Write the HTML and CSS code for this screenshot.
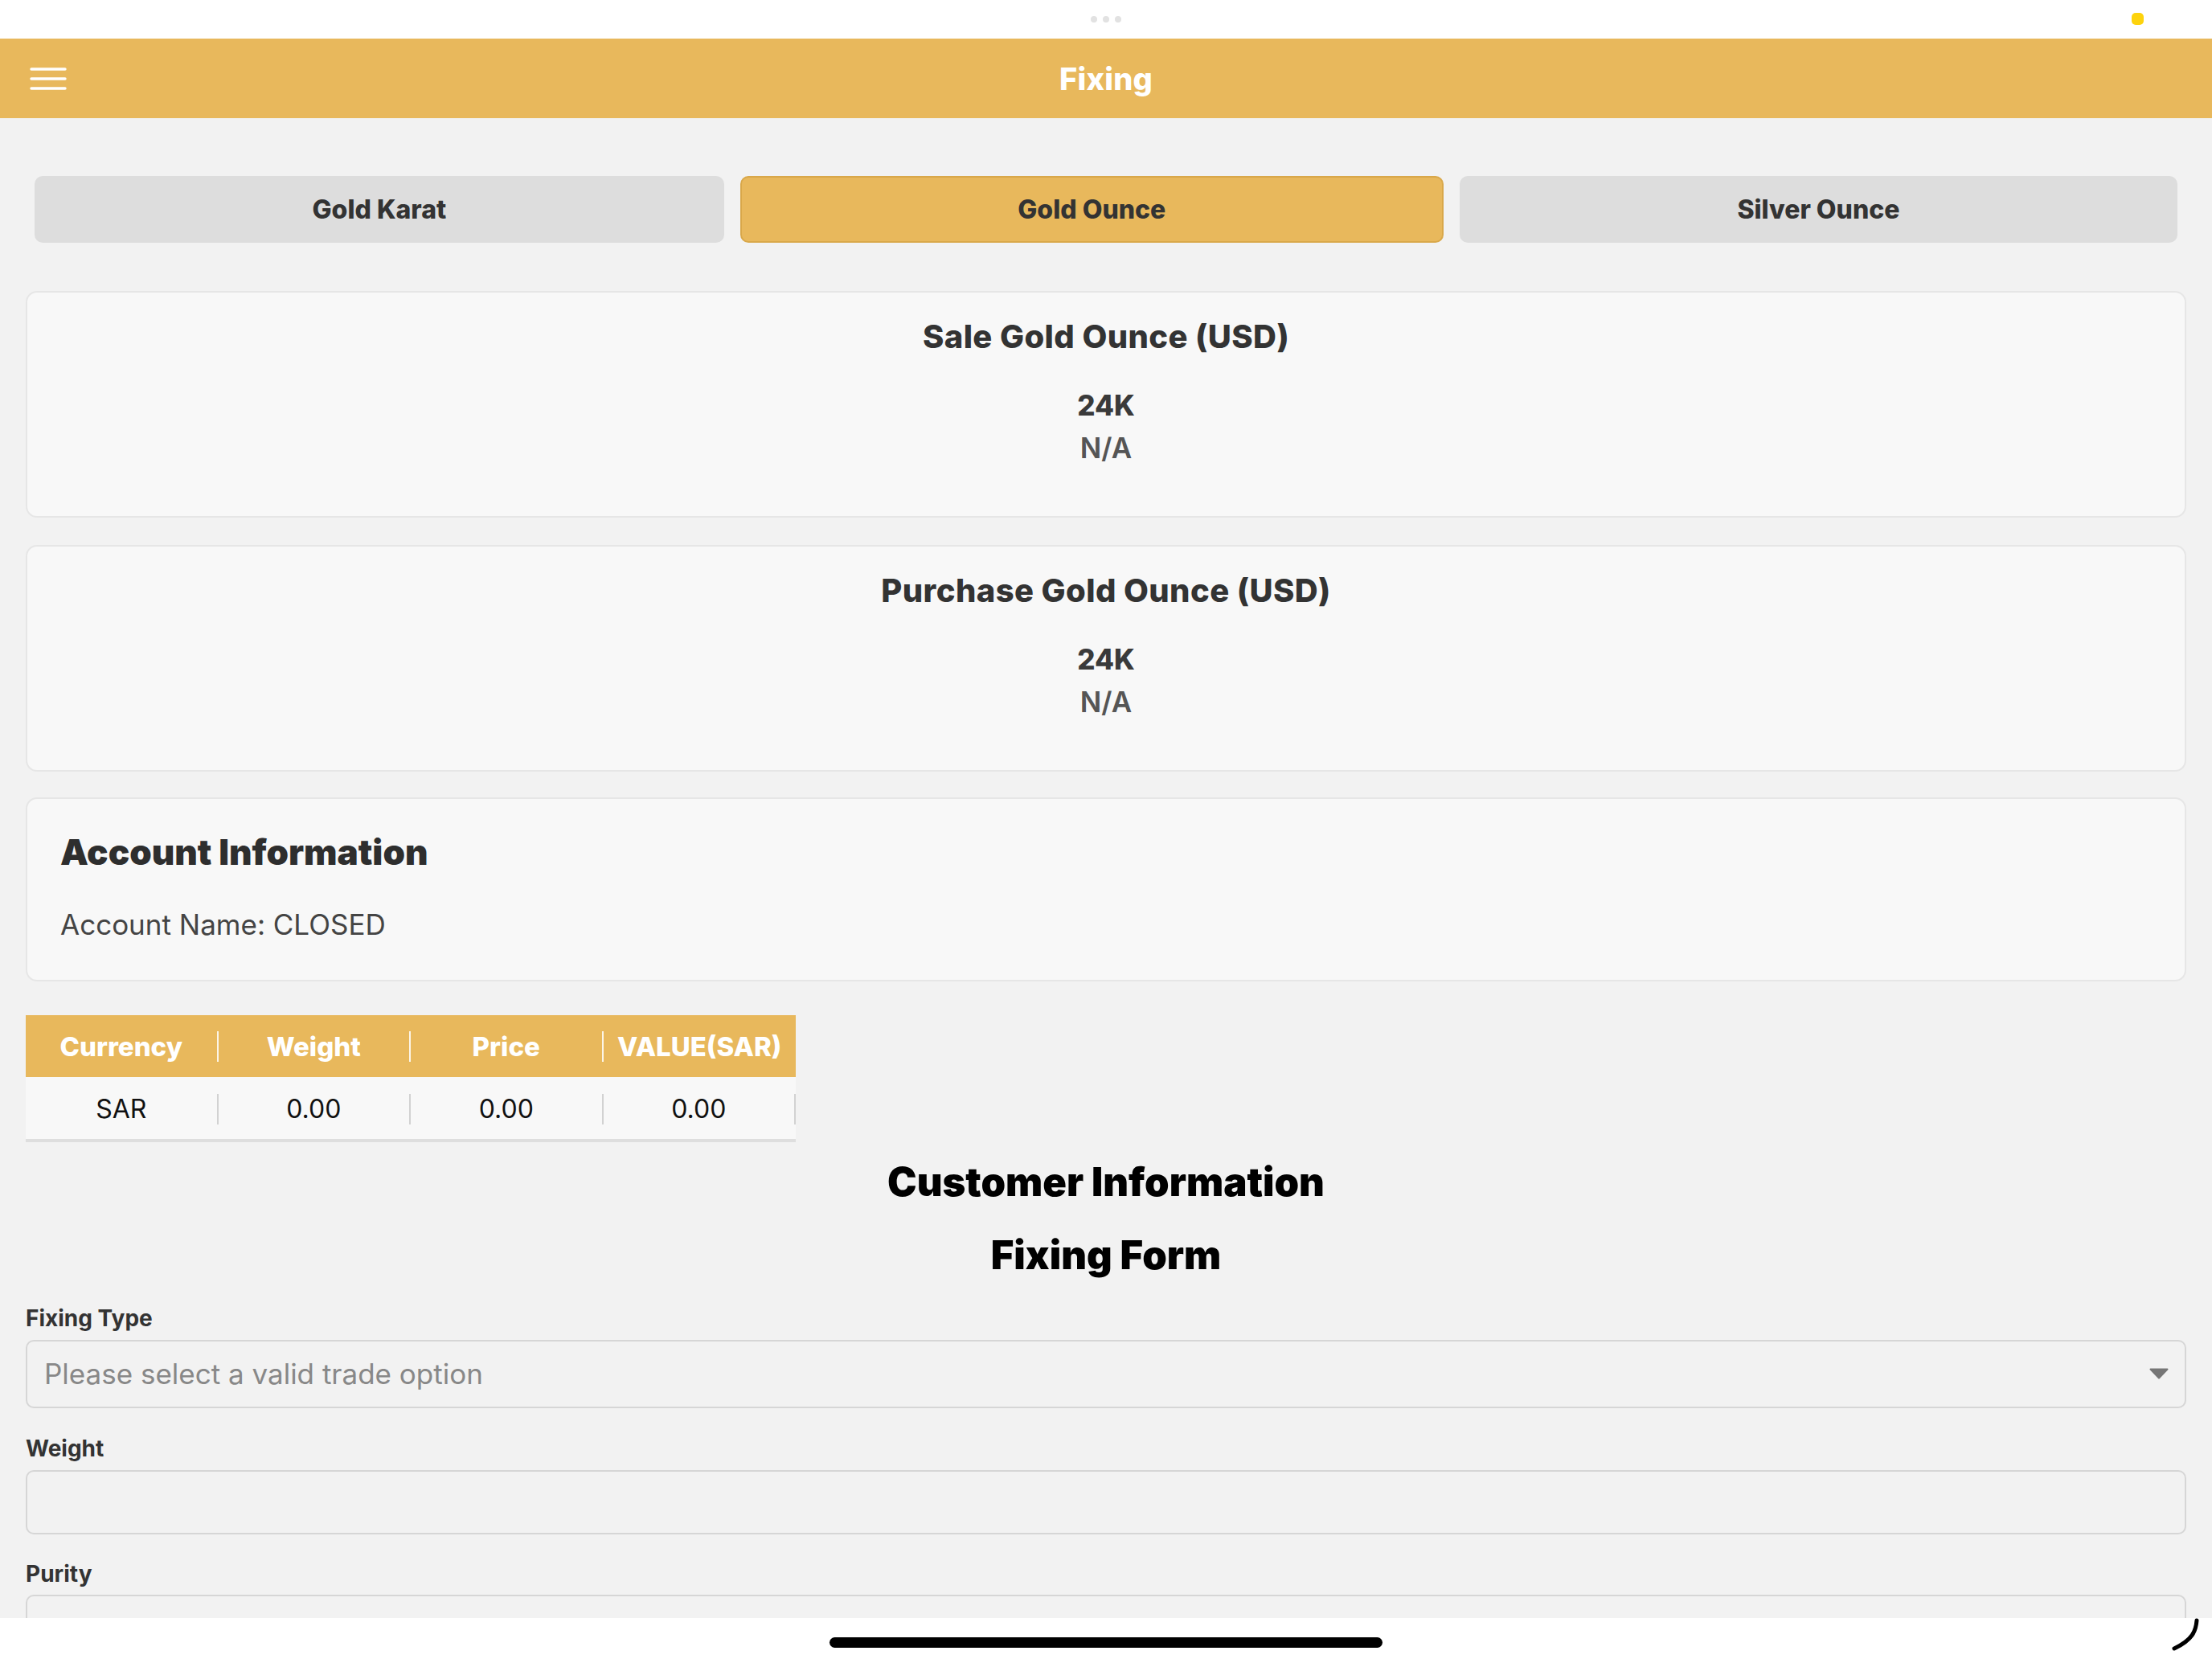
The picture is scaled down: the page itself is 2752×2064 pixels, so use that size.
FILE: index.html
```html
<!DOCTYPE html>
<html lang="en">
<head>
<meta charset="utf-8">
<title>Fixing</title>
<link rel="stylesheet" href="styles.css">
</head>
<body>
<div class="statusbar">
  <span></span>
  <div class="grabber"><i></i><i></i><i></i></div>
  <div class="status-right"><i class="privacy-dot"></i></div>
</div>
<header class="topbar">
  <button class="menu" aria-label="Menu">
    <svg width="46" height="30" viewBox="0 0 46 30"><g stroke="#fff" stroke-width="3.4" stroke-linecap="round"><line x1="2" y1="3" x2="44" y2="3"/><line x1="2" y1="15" x2="44" y2="15"/><line x1="2" y1="27" x2="44" y2="27"/></g></svg>
  </button>
  <h1>Fixing</h1>
  <span></span>
</header>
<main class="content">
  <nav class="tabs">
    <button class="tab">Gold Karat</button>
    <button class="tab active">Gold Ounce</button>
    <button class="tab">Silver Ounce</button>
  </nav>
  <section class="card price-card">
    <h2>Sale Gold Ounce (USD)</h2>
    <div class="karat">24K</div>
    <div class="value">N/A</div>
  </section>
  <section class="card price-card">
    <h2>Purchase Gold Ounce (USD)</h2>
    <div class="karat">24K</div>
    <div class="value">N/A</div>
  </section>
  <section class="card account-card">
    <h2>Account Information</h2>
    <p>Account Name: CLOSED</p>
  </section>
  <div class="summary">
    <div class="row head"><span>Currency</span><span>Weight</span><span>Price</span><span>VALUE(SAR)</span></div>
    <div class="row body"><span>SAR</span><span>0.00</span><span>0.00</span><span>0.00</span></div>
  </div>
  <h2 class="section-title first">Customer Information</h2>
  <h2 class="section-title">Fixing Form</h2>
  <form class="fixing-form">
    <label class="field-label">Fixing Type</label>
    <div class="select">
      <span>Please select a valid trade option</span>
      <svg width="24" height="14" viewBox="0 0 24 14"><path d="M1.5 1.5 H22.5 L12 12.5 Z" fill="#767676" stroke="#767676" stroke-width="2" stroke-linejoin="round"/></svg>
    </div>
    <label class="field-label">Weight</label>
    <input class="text-input" type="text">
    <label class="field-label">Purity</label>
    <input class="text-input" type="text">
  </form>
</main>
<footer class="homebar">
  <span></span>
  <span class="home-indicator"></span>
  <div class="pencil-wrap">
    <svg width="40" height="42" viewBox="0 0 40 42"><path d="M35 3 C34 16 30 27 7 38" fill="none" stroke="#000" stroke-width="5" stroke-linecap="round"/></svg>
  </div>
</footer>
</body>
</html>
```
FILE: styles.css
```css
* { box-sizing: border-box; }
html, body { margin: 0; padding: 0; }
body {
  width: 2752px;
  height: 2064px;
  overflow: hidden;
  display: flex;
  flex-direction: column;
  background: #f2f2f2;
  font-family: Inter, "Noto Sans", "Liberation Sans", sans-serif;
  color: #333;
}
.statusbar {
  height: 48px;
  flex: none;
  background: #fff;
  display: grid;
  grid-template-columns: 1fr auto 1fr;
  align-items: center;
}
.grabber { display: flex; gap: 7px; }
.grabber i { width: 8px; height: 8px; border-radius: 50%; background: #e2e2e2; display: block; }
.status-right { display: flex; justify-content: flex-end; padding-right: 85px; padding-bottom: 2px; }
.privacy-dot { display: block; width: 15px; height: 15px; border-radius: 5px; background: #fdd30d; }

.topbar {
  height: 99px;
  flex: none;
  background: #e8b85c;
  display: grid;
  grid-template-columns: 1fr auto 1fr;
  align-items: center;
}
.menu {
  justify-self: start;
  margin-left: 37px;
  padding: 0;
  border: 0;
  background: none;
  display: flex;
}
.topbar h1 {
  margin: 0;
  color: #fff;
  font-size: 38px;
  font-weight: 800;
  letter-spacing: 0.2px;
}

.content {
  flex: 1;
  min-height: 0;
  overflow: hidden;
  padding: 0 32px;
}
.tabs {
  display: flex;
  gap: 20px;
  padding: 0 11px;
  margin-top: 72px;
}
.tab {
  flex: 1 1 auto;
  height: 83px;
  border: 2px solid #dddddd;
  background: #dddddd;
  border-radius: 10px;
  font-family: inherit;
  font-size: 32px;
  font-weight: 800;
  color: #333;
}
.tab.active {
  background: #e8b85c;
  border-color: #d9a84a;
}

.card {
  background: #f8f8f8;
  border: 2px solid #e6e6e6;
  border-radius: 14px;
}
.price-card {
  margin-top: 60px;
  padding: 31px 0 64px;
  text-align: center;
}
.price-card + .price-card { margin-top: 34px; }
.price-card h2 {
  margin: 0;
  font-size: 40px;
  line-height: 48px;
  font-weight: 800;
  letter-spacing: 0.4px;
  color: #333;
}
.karat {
  margin-top: 40px;
  font-size: 35px;
  line-height: 42px;
  font-weight: 800;
  color: #3a3a3a;
}
.value {
  margin-top: 11px;
  font-size: 35px;
  line-height: 42px;
  font-weight: 600;
  color: #555;
}
.account-card {
  margin-top: 32px;
  padding: 40px 41px 48px;
}
.account-card h2 {
  margin: 0;
  font-size: 44px;
  line-height: 1.2;
  font-weight: 900;
  color: #2e2e2e;
}
.account-card p {
  margin: 42px 0 0;
  font-size: 35px;
  line-height: 1.2;
  color: #444;
}

.summary {
  width: 958px;
  margin-top: 42px;
  border-bottom: 4px solid #dedede;
}
.row {
  display: grid;
  grid-template-columns: repeat(4, 1fr);
}
.row span {
  height: 38px;
  line-height: 38px;
  text-align: center;
  font-size: 32px;
}
.row.head {
  background: #e8b85c;
  padding: 20px 0 19px;
}
.row.head span {
  color: #fff;
  font-size: 33px;
  font-weight: 800;
  border-right: 2px solid rgba(255,255,255,0.85);
}
.row.head span:last-child { border-right: 0; }
.row.body {
  background: #f8f8f8;
  padding: 21px 0 18px;
}
.row.body span {
  color: #111;
  border-right: 2px solid #d2d2d2;
}

.section-title {
  margin: 0;
  text-align: center;
  font-size: 49px;
  line-height: 1.2;
  font-weight: 900;
  color: #000;
}
.section-title.first { margin-top: 21px; }
.section-title + .section-title { margin-top: 32px; }

.fixing-form {
  display: flex;
  flex-direction: column;
  margin-top: 33px;
}
.field-label {
  font-size: 28px;
  line-height: 1.2;
  font-weight: 700;
  color: #333;
  margin-bottom: 9px;
}
.select, .text-input {
  width: 100%;
  border: 2px solid #d6d6d6;
  border-radius: 10px;
  background: #f2f2f2;
}
.select {
  height: 85px;
  display: flex;
  align-items: center;
  justify-content: space-between;
  padding: 0 20px 0 21px;
  font-size: 35px;
  color: #888;
  margin-bottom: 34px;
}
.text-input {
  height: 80px;
  margin: 0 0 33px;
  font-family: inherit;
  font-size: 34px;
  padding: 0 21px;
}

.homebar {
  height: 51px;
  flex: none;
  background: #fff;
  display: grid;
  grid-template-columns: 1fr 688px 1fr;
  align-items: start;
}
.home-indicator {
  display: block;
  height: 13px;
  margin-top: 24px;
  border-radius: 7px;
  background: #000;
}
.pencil-wrap {
  justify-self: end;
  padding-right: 14px;
  display: flex;
}
```
